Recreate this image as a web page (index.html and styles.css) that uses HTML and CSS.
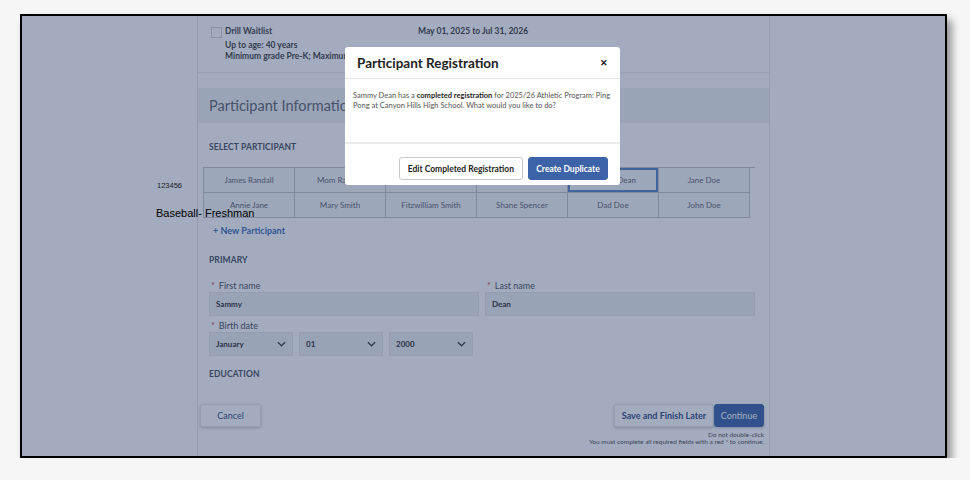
FILE: index.html
```html
<!DOCTYPE html>
<html>
<head>
  <link rel="stylesheet" href="styles.css">
</head>
<body>
  <div class="frame">
    <div class="page">
      <div class="column">
        <div class="card program">
          <span class="checkbox"></span>
          <div class="program-info">
            <div class="program-name">Drill Waitlist</div>
            <div class="program-line">Up to age: 40 years</div>
            <div class="program-line">Minimum grade Pre-K; Maximum grade 12</div>
          </div>
          <div class="program-date">May 01, 2025 to Jul 31, 2026</div>
        </div>

        <div class="section-head">Participant Information</div>
        <div class="card details">
          <div class="subhead">SELECT PARTICIPANT</div>
          <div class="participants">
            <div class="person">James Randall</div>
            <div class="person">Mom Randall</div>
            <div class="person">Tom Randall</div>
            <div class="person">Sara Dean</div>
            <div class="person selected">Sammy Dean</div>
            <div class="person">Jane Doe</div>
            <div class="person">Annie Jane</div>
            <div class="person">Mary Smith</div>
            <div class="person">Fitzwilliam Smith</div>
            <div class="person">Shane Spencer</div>
            <div class="person">Dad Doe</div>
            <div class="person">John Doe</div>
          </div>
          <a class="new-link">+ New Participant</a>

          <div class="subhead primary">PRIMARY</div>
          <div class="field-row">
            <div class="field">
              <label class="req">First name</label>
              <div class="input">Sammy</div>
            </div>
            <div class="field">
              <label class="req">Last name</label>
              <div class="input">Dean</div>
            </div>
          </div>
          <div class="field">
            <label class="req">Birth date</label>
            <div class="selects">
              <div class="select">January <svg viewBox="0 0 10 6"><path d="M1 1l4 4 4-4" /></svg></div>
              <div class="select">01 <svg viewBox="0 0 10 6"><path d="M1 1l4 4 4-4" /></svg></div>
              <div class="select">2000 <svg viewBox="0 0 10 6"><path d="M1 1l4 4 4-4" /></svg></div>
            </div>
          </div>
          <div class="subhead education">EDUCATION</div>
        </div>

        <div class="actions">
          <button class="btn">Cancel</button>
          <div class="actions-right">
            <div class="btn-pair">
              <button class="btn btn-save">Save and Finish Later</button>
              <button class="btn btn-blue">Continue</button>
            </div>
            <div class="note">Do not double-click</div>
            <div class="note">You must complete all required fields with a red * to continue.</div>
          </div>
        </div>
      </div>
    </div>

    <div class="backdrop"></div>
    <div class="stray code">123456</div>
    <div class="stray team">Baseball- Freshman</div>

    <div class="modal">
      <div class="modal-head">
        <h2>Participant Registration</h2>
        <span class="close">&#x2715;</span>
      </div>
      <div class="modal-body">
        Sammy Dean has a <b>completed registration</b> for 2025/26 Athletic Program: Ping Pong at Canyon Hills High School. What would you like to do?
      </div>
      <div class="modal-foot">
        <button class="mbtn">Edit Completed Registration</button>
        <button class="mbtn mbtn-blue">Create Duplicate</button>
      </div>
    </div>
  </div>
</body>
</html>
```

FILE: styles.css
```css
body {
  margin: 0;
  background: #f6f6f6;
  font-family: Lato, "Open Sans", sans-serif;
  color: #333;
}

.frame {
  position: relative;
  margin: 14px 0 0 20px;
  width: 923px;
  height: 440px;
  border: 2px solid #000;
  box-shadow: 5px 6px 8px rgba(0, 0, 0, 0.4);
  overflow: hidden;
  background: #fff;
}

.page {
  height: 100%;
  background: #fff;
}

.column {
  width: 571px;
  margin: 0 auto;
  height: 100%;
  box-shadow: -1px 0 0 #e4e6ea, 1px 0 0 #e4e6ea;
}

.card {
  background: #fff;
}

.program {
  display: flex;
  align-items: flex-start;
  padding: 10px 13px 0;
  height: 57px;
  box-sizing: border-box;
  border-bottom: 1px solid #e8eaee;
  font-size: 8.5px;
  font-weight: bold;
}

.checkbox {
  width: 9px;
  height: 9px;
  border: 1px solid #ccd0d6;
  margin: 1px 3px 0 0;
  flex: none;
}

.program-info {
  width: 193px;
  line-height: 11px;
}

.program-name {
  margin-bottom: 3px;
}

.program-date {
  line-height: 11px;
}

.section-head {
  margin-top: 15px;
  height: 35px;
  background: #eef0f3;
  padding-left: 11px;
  font-size: 14.5px;
  line-height: 35px;
  color: #555c66;
}

.details {
  padding: 19px 14px 0 11px;
  height: 267px;
  box-sizing: border-box;
}

.subhead {
  font-size: 8.5px;
  font-weight: bold;
  color: #3e4552;
  letter-spacing: 0.1px;
}

.participants {
  display: grid;
  grid-template-columns: repeat(6, 91px);
  margin: 15px 0 0 -6px;
  border-top: 1px solid #bcc1c9;
  border-left: 1px solid #bcc1c9;
}

.person {
  height: 24px;
  border-right: 1px solid #bcc1c9;
  border-bottom: 1px solid #bcc1c9;
  background: #f5f6f8;
  font-size: 8px;
  color: #555c67;
  display: flex;
  align-items: center;
  justify-content: center;
}

.person.selected {
  box-shadow: inset 0 0 0 2px #4f7bbf;
}

.new-link {
  display: block;
  margin: 7px 0 0 4px;
  font-size: 9px;
  font-weight: bold;
  color: #2f63b3;
}

.primary {
  margin-top: 19px;
}

.field-row {
  display: flex;
  gap: 6px;
  margin-top: 15px;
}

.field {
  flex: 1;
}

.field label {
  display: block;
  font-size: 9px;
  color: #3e4552;
  padding-left: 2px;
  margin-bottom: 1px;
}

.req::before {
  content: "*";
  color: #c23a4a;
  margin-right: 4px;
}

.input {
  height: 24px;
  background: #eceef1;
  border: 1px solid #e2e5ea;
  box-sizing: border-box;
  padding-left: 6px;
  font-size: 8px;
  font-weight: bold;
  line-height: 22px;
  color: #222;
}

.field-row + .field {
  margin-top: 4px;
}

.selects {
  display: flex;
  gap: 6px;
}

.select {
  width: 84px;
  height: 24px;
  box-sizing: border-box;
  background: #eceef1;
  border: 1px solid #e2e5ea;
  display: flex;
  align-items: center;
  justify-content: space-between;
  padding: 0 6px;
  font-size: 8px;
  font-weight: bold;
  color: #222;
}

.select svg {
  width: 9px;
  height: 6px;
  fill: none;
  stroke: #333;
  stroke-width: 1.5;
}

.education {
  margin-top: 13px;
}

.actions {
  display: flex;
  justify-content: space-between;
  align-items: flex-start;
  padding: 14px 5px 0 2px;
}

.btn {
  font-family: inherit;
  height: 23px;
  padding: 0 8px;
  border: 1px solid #e5e7eb;
  border-radius: 3px;
  background: #fff;
  box-shadow: 0 1px 3px rgba(0, 0, 0, 0.25);
  color: #23427a;
  font-size: 9px;
  font-weight: bold;
}

.actions > .btn {
  width: 61px;
  font-weight: normal;
}

.btn-save {
  width: 100px;
  padding: 0;
}

.actions-right {
  display: flex;
  flex-direction: column;
  align-items: flex-end;
}

.btn-pair {
  display: flex;
  margin-bottom: 4px;
}

.btn-blue {
  background: #2e5aa3;
  border-color: #2e5aa3;
  color: #fff;
  width: 50px;
  padding: 0;
  font-weight: normal;
}

.note {
  font-size: 6.5px;
  line-height: 7px;
  color: #444;
}

.backdrop {
  position: absolute;
  inset: 0;
  background: rgba(50, 70, 110, 0.45);
}

.stray {
  position: absolute;
  font-family: "Liberation Sans", Arial, sans-serif;
  color: #1a1a1a;
}

.stray.code {
  left: 135px;
  top: 165px;
  font-size: 7.5px;
}

.stray.team {
  left: 134px;
  top: 191px;
  font-size: 11px;
  color: #000;
}

.modal {
  position: absolute;
  left: 323px;
  top: 31px;
  width: 275px;
  height: 138px;
  background: #fff;
  border-radius: 3px;
  display: flex;
  flex-direction: column;
}

.modal-head {
  height: 31px;
  border-bottom: 1px solid #e6e6e6;
  display: flex;
  align-items: center;
  justify-content: space-between;
  padding: 0 12px 0 12px;
  flex: none;
}

.modal-head h2 {
  margin: 0;
  font-size: 13.5px;
  color: #222;
}

.close {
  font-size: 9px;
  font-weight: bold;
  color: #222;
}

.modal-body {
  flex: 1;
  padding: 12px 8px 0;
  font-size: 7.5px;
  line-height: 10px;
  color: #555;
}

.modal-body b {
  color: #222;
}

.modal-foot {
  border-top: 2px solid #ececec;
  height: 43px;
  box-sizing: border-box;
  display: flex;
  justify-content: flex-end;
  align-items: flex-start;
  gap: 5px;
  padding: 13px 12px 0;
}

.mbtn {
  font-family: inherit;
  height: 23px;
  padding: 0 8px;
  border: 1px solid #c9c9c9;
  border-radius: 3px;
  background: #fff;
  color: #222;
  font-size: 8.5px;
  font-weight: bold;
}

.mbtn-blue {
  background: #3c63a8;
  border-color: #3c63a8;
  color: #fff;
  width: 80px;
  padding: 0;
}
```
